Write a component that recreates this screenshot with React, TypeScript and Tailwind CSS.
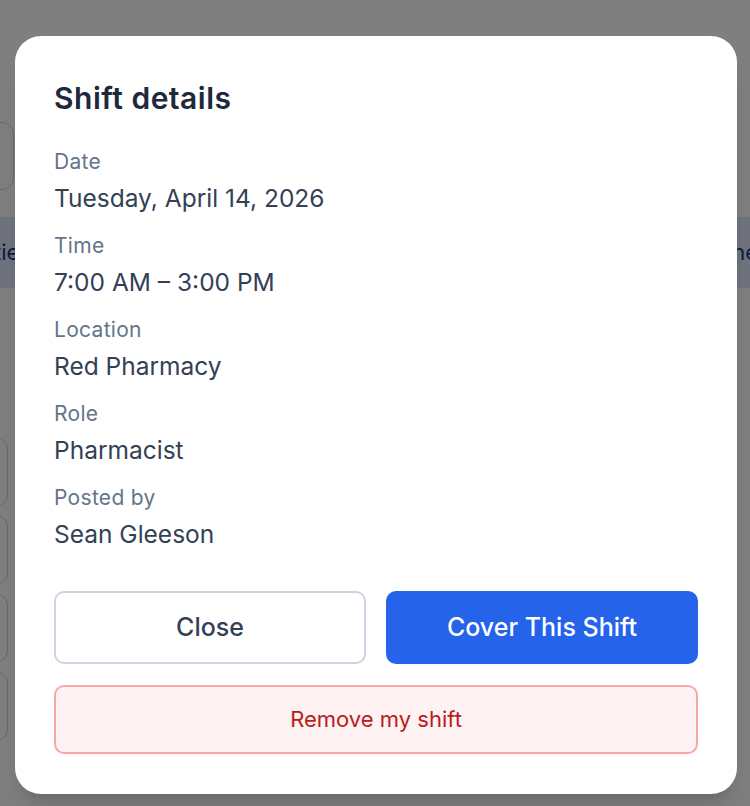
import React from "react";

const rows = [
  { label: "Date", value: "Tuesday, April 14, 2026" },
  { label: "Time", value: "7:00 AM – 3:00 PM" },
  { label: "Location", value: "Red Pharmacy" },
  { label: "Role", value: "Pharmacist" },
  { label: "Posted by", value: "Sean Gleeson" },
];

export default function App() {
  return (
    <div
      className="relative h-[806px] w-[750px] overflow-hidden bg-white"
      style={{ fontFamily: "Inter, 'Noto Sans', sans-serif" }}
    >
      {/* underlying page */}
      <div className="flex flex-col">
        <div className="mt-[122px] h-[68px] w-[40px] -ml-[26px] rounded-xl border border-slate-300" />
        <div className="mt-[27px] flex h-[71px] items-center justify-between bg-[#dce6fb] text-[22px] text-[#1e3a8a]">
          <span className="-ml-[6px]">tie</span>
          <span className="-mr-[8px]">he</span>
        </div>
        <div className="mt-[149px] flex flex-col gap-[8px]">
          {[0, 1, 2, 3].map((i) => (
            <div key={i} className="flex items-center justify-between">
              <div className="h-[70px] w-[30px] -ml-[22px] rounded-xl border border-slate-300" />
            </div>
          ))}
        </div>
      </div>

      {/* overlay */}
      <div className="absolute inset-0 flex justify-center bg-black/50 pt-[36px]">
        <div className="ml-[2px] h-[758px] w-[722px] rounded-[26px] bg-white px-[39px] pt-[40px] shadow-xl">
          <h2 className="text-[30px] font-semibold leading-[44px] tracking-[0.5px] text-[#1e293b]">
            Shift details
          </h2>
          <div className="mt-[24px] flex flex-col">
            {rows.map((r) => (
              <div key={r.label} className="flex flex-col pb-[12px]">
                <div className="text-[21px] leading-[36px] tracking-[0.3px] text-[#64748b]">{r.label}</div>
                <div className="text-[24.5px] leading-[36px] text-[#334155]">{r.value}</div>
              </div>
            ))}
          </div>
          <div className="mt-[27px] grid grid-cols-2 gap-[20px]">
            <button className="h-[73px] rounded-[10px] border-2 border-[#cbd5e1] bg-white text-[25px] font-medium text-[#334155]">
              Close
            </button>
            <button className="h-[73px] rounded-[10px] bg-[#2563eb] text-[25px] font-medium text-white">
              Cover This Shift
            </button>
          </div>
          <button className="mt-[21px] h-[69px] w-full rounded-[10px] border-2 border-[#fca5a5] bg-[#fef2f2] text-[22px] font-normal text-[#b91c1c]">
            Remove my shift
          </button>
        </div>
      </div>
    </div>
  );
}
